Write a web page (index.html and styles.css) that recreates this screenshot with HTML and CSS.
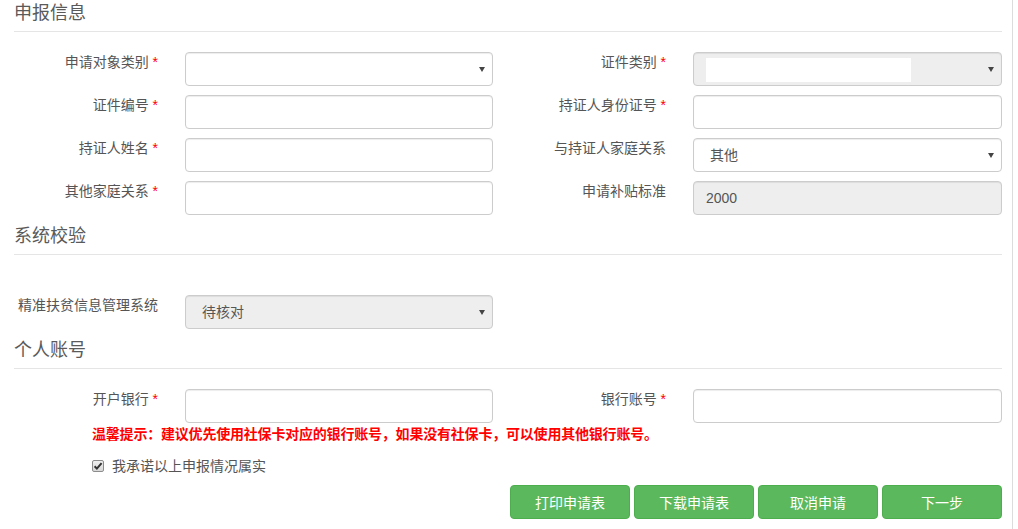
FILE: index.html
```html
<!DOCTYPE html>
<html lang="zh-CN">
<head>
<meta charset="utf-8">
<title>申报信息</title>
<link rel="stylesheet" href="styles.css">
</head>
<body>
<div class="page">
  <h2 class="sec-title">申报信息</h2>
  <div class="form-grid">
    <div class="field">
      <label class="lbl">申请对象类别 <span class="req">*</span></label>
      <div class="sel-wrap"><select class="ctl sel"><option></option></select></div>
    </div>
    <div class="field">
      <label class="lbl">证件类别 <span class="req">*</span></label>
      <div class="sel-wrap"><select class="ctl sel" disabled><option></option></select><span class="mask"></span></div>
    </div>
    <div class="field">
      <label class="lbl">证件编号 <span class="req">*</span></label>
      <input class="ctl" type="text">
    </div>
    <div class="field">
      <label class="lbl">持证人身份证号 <span class="req">*</span></label>
      <input class="ctl" type="text">
    </div>
    <div class="field">
      <label class="lbl">持证人姓名 <span class="req">*</span></label>
      <input class="ctl" type="text">
    </div>
    <div class="field">
      <label class="lbl">与持证人家庭关系</label>
      <div class="sel-wrap"><select class="ctl sel"><option>其他</option></select></div>
    </div>
    <div class="field">
      <label class="lbl">其他家庭关系 <span class="req">*</span></label>
      <input class="ctl" type="text">
    </div>
    <div class="field">
      <label class="lbl">申请补贴标准</label>
      <input class="ctl" type="text" value="2000" disabled>
    </div>
  </div>

  <h2 class="sec-title gap-top">系统校验</h2>
  <div class="form-grid sys-grid">
    <div class="field">
      <label class="lbl">精准扶贫信息管理系统</label>
      <div class="sel-wrap"><select class="ctl sel" disabled><option>待核对</option></select></div>
    </div>
  </div>

  <h2 class="sec-title gap-top">个人账号</h2>
  <div class="form-grid">
    <div class="field">
      <label class="lbl">开户银行 <span class="req">*</span></label>
      <input class="ctl" type="text">
    </div>
    <div class="field">
      <label class="lbl">银行账号 <span class="req">*</span></label>
      <input class="ctl" type="text">
    </div>
  </div>
  <p class="notice">温馨提示：建议优先使用社保卡对应的银行账号，如果没有社保卡，可以使用其他银行账号。</p>
  <div class="promise">
    <span class="chk"><svg viewBox="0 0 10 10" width="10" height="10"><path d="M1.6 5.2 L3.9 7.6 L8.6 2.2" fill="none" stroke="#333" stroke-width="2"/></svg></span>
    <span>我承诺以上申报情况属实</span>
  </div>
  <div class="actions">
    <button class="btn" type="button">打印申请表</button>
    <button class="btn" type="button">下载申请表</button>
    <button class="btn" type="button">取消申请</button>
    <button class="btn" type="button">下一步</button>
  </div>
</div>
</body>
</html>
```
FILE: styles.css
```css
* { box-sizing: border-box; }
html, body { margin: 0; padding: 0; background: #fff; }
body {
  font-family: "Liberation Sans", "Noto Sans CJK SC", sans-serif;
  font-size: 14px;
  color: #555;
}
.page {
  width: 1013px;
  min-height: 529px;
  padding: 0 10px 0 14px;
  border-right: 1px solid #dcdcdc;
}
.sec-title {
  margin: 0;
  font-size: 18px;
  font-weight: normal;
  line-height: 26px;
  padding-bottom: 5px;
  border-bottom: 1px solid #e5e5e5;
  color: #5a5a5a;
}
.gap-top { margin-top: 8px; }
.form-grid {
  display: grid;
  grid-template-columns: 479px 480px;
  column-gap: 29px;
  row-gap: 9px;
  margin-top: 20px;
}
.sys-grid { margin-top: 40px; }
.field { display: flex; align-items: flex-start; }
.lbl {
  flex: 0 0 171px;
  text-align: right;
  padding-right: 27px;
  line-height: 20px;
  color: #555;
  white-space: nowrap;
}
.req { color: #f00; }
.ctl {
  flex: 1;
  width: 100%;
  height: 34px;
  border: 1px solid #ccc;
  border-radius: 4px;
  padding: 6px 12px;
  font: inherit;
  font-size: 14px;
  color: #555;
  background: #fff;
  box-shadow: inset 0 1px 1px rgba(0,0,0,.075);
  outline: none;
}
.ctl:disabled { background: #eee; color: #555; opacity: 1; }
.sel-wrap { flex: 1; position: relative; }
.sel {
  -webkit-appearance: none;
  appearance: none;
  padding-left: 16px;
  display: block;
}
.sel-wrap::after {
  content: "";
  position: absolute;
  right: 8px;
  top: 15px;
  border-left: 3px solid transparent;
  border-right: 3px solid transparent;
  border-top: 5px solid #444;
}
.mask {
  position: absolute;
  left: 13px;
  top: 6px;
  width: 205px;
  height: 24px;
  background: #fff;
}
.notice {
  margin: 1px 0 0;
  padding-left: 78px;
  line-height: 20px;
  font-size: 14px;
  letter-spacing: -0.2px;
  font-weight: bold;
  color: #f00;
}
.promise {
  margin-top: 12px;
  padding-left: 78px;
  line-height: 20px;
  display: flex;
  align-items: center;
  gap: 8px;
  color: #555;
}
.chk {
  width: 12px;
  height: 12px;
  border: 1px solid #8d8d8d;
  border-radius: 2px;
  background: linear-gradient(#f0f0f0, #d8d8d8);
  display: flex;
  align-items: center;
  justify-content: center;
}
.chk svg { display: block; }
.actions {
  margin-top: 9px;
  display: flex;
  justify-content: flex-end;
  gap: 4px;
}
.btn {
  width: 120px;
  height: 34px;
  border: 1px solid #4cae4c;
  border-radius: 4px;
  background: #5cb85c;
  color: #fff;
  font: inherit;
  font-size: 14px;
  padding: 0;
}
```
